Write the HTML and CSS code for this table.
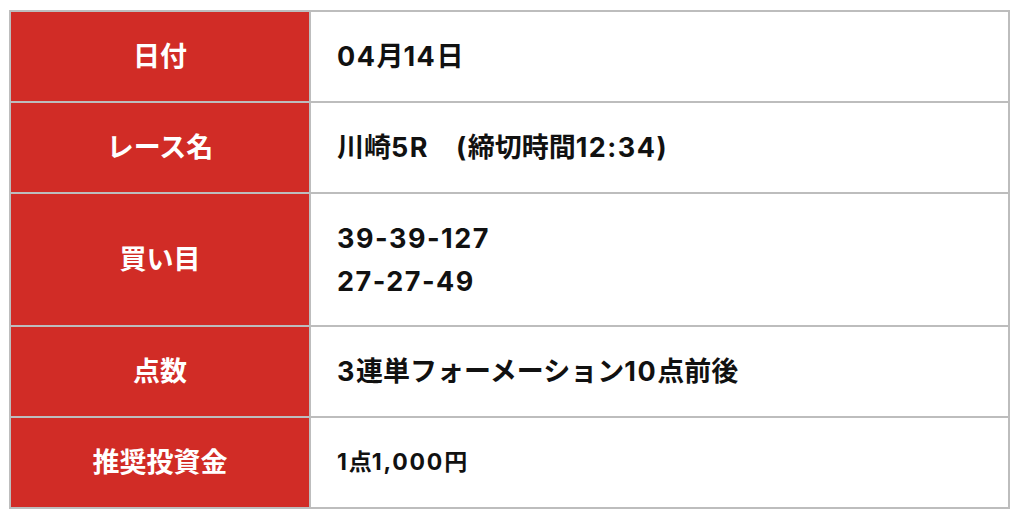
FILE: index.html
```html
<!DOCTYPE html>
<html lang="ja">
<head>
<meta charset="utf-8">
<link rel="stylesheet" href="styles.css">
</head>
<body>
<div class="wrap">
<table class="info">
  <tr><th>日付</th><td><span class="num">04</span>月<span class="num">14</span>日</td></tr>
  <tr><th>レース名</th><td>川崎<span class="num">5R</span>　<span class="num">(</span>締切時間<span class="num">12:34)</span></td></tr>
  <tr><th>買い目</th><td><span class="num">39-39-127</span><br><span class="num">27-27-49</span></td></tr>
  <tr><th>点数</th><td><span class="num">3</span>連単フォーメーション<span class="num">10</span>点前後</td></tr>
  <tr><th>推奨投資金</th><td class="small"><span class="num">1</span>点<span class="num">1,000</span>円</td></tr>
</table>
</div>
</body>
</html>
```

FILE: styles.css
```css
html, body {
  margin: 0;
  padding: 0;
  background: #ffffff;
}
.wrap {
  padding: 10px 14px 10px 9px;
}
.info {
  width: 1001px;
  border-collapse: collapse;
  font-family: "Inter", "Noto Sans CJK JP", "Noto Sans", sans-serif;
  font-weight: bold;
}
.info th,
.info td {
  border: 2px solid #bdbdbd;
  height: 89px;
  padding: 0;
  line-height: 43px;
}
.info th {
  width: 298px;
  background: #d12c26;
  color: #ffffff;
  font-size: 27px;
  text-align: center;
}
.info td {
  color: #111111;
  font-size: 27px;
  text-align: left;
  padding-left: 26px;
}
.info tr:nth-child(3) th,
.info tr:nth-child(3) td {
  height: 131px;
}
.info td.small {
  font-size: 23px;
}
.num {
  letter-spacing: 1.5px;
}
.small .num {
  letter-spacing: 1.8px;
}
```
